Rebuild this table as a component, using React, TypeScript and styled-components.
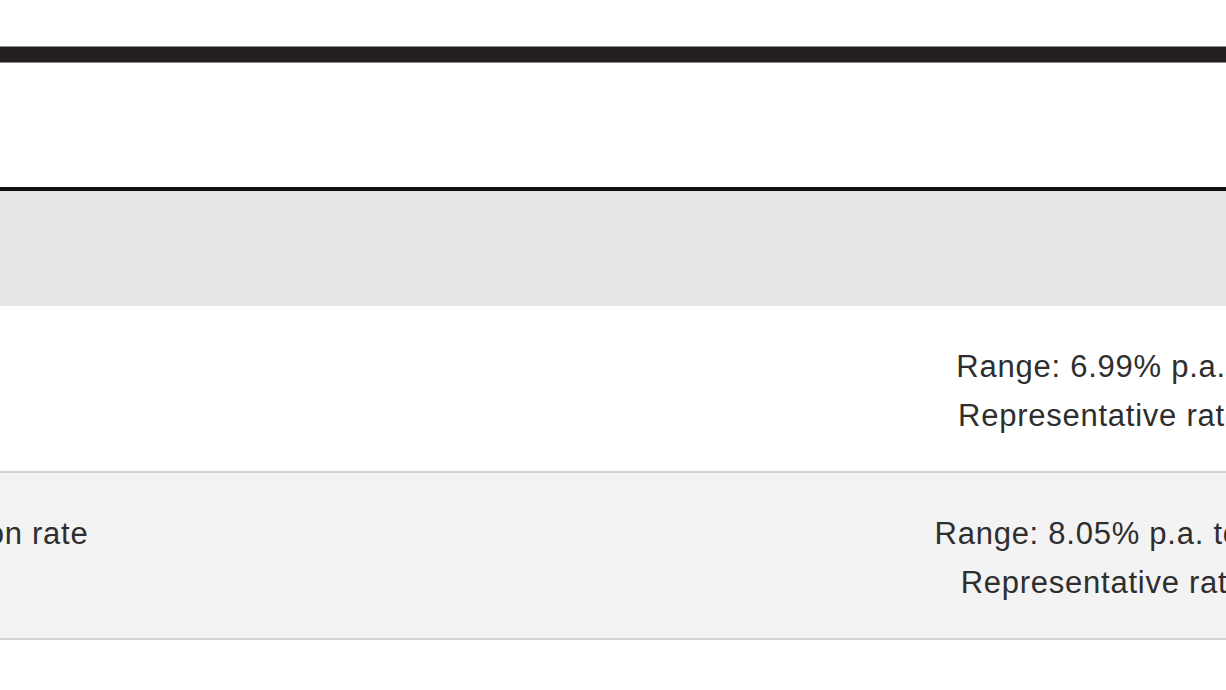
import React from "react";
import styled, { createGlobalStyle } from "styled-components";

const GlobalStyle = createGlobalStyle`
  html, body {
    margin: 0;
    padding: 0;
    background: #ffffff;
    overflow: hidden;
  }
`;

const Page = styled.div`
  width: 1226px;
  height: 690px;
  overflow: hidden;
  background: #ffffff;
  font-family: "Liberation Sans", Arial, sans-serif;
  color: #2e2e2e;
`;

const TopBar = styled.div`
  margin-top: 46px;
  height: 15px;
  background: #231f20;
  border-top: 1px solid #8c8a8b;
  border-bottom: 1px solid #8c8a8b;
`;

const Caption = styled.div`
  height: 124px;
`;

const RatesTable = styled.div`
  width: 1984px;
  margin-left: -200px;
  border-top: 4px solid #111111;
`;

const HeadRow = styled.div`
  height: 115px;
  background: #e6e6e6;
`;

const Row = styled.div<{ $shade?: boolean }>`
  display: grid;
  grid-template-columns: 800px 1184px;
  background: ${(p) => (p.$shade ? "#f3f3f3" : "#ffffff")};
  border-bottom: 2px solid #d3d3d3;
  padding: 36px 0 31px;
  font-size: 31px;
  line-height: 49px;
  letter-spacing: 0.75px;
`;

const Label = styled.div`
  padding-left: 48px;
`;

const Value = styled.div`
  text-align: center;
`;

const rows = [
  {
    label: "Rate",
    range: "Range: 6.99% p.a. to 19.9% p.a.",
    rep: "Representative rate 12.49% p.a.",
  },
  {
    label: "Comparison rate",
    range: "Range: 8.05% p.a. to 20.88% p.a.**",
    rep: "Representative rate 9.99% p.a.*",
  },
];

export default function App() {
  return (
    <Page>
      <GlobalStyle />
      <TopBar />
      <Caption />
      <RatesTable>
        <HeadRow />
        {rows.map((r, i) => (
          <Row key={r.label} $shade={i % 2 === 1}>
            <Label>{r.label}</Label>
            <Value>
              <div>{r.range}</div>
              <div>{r.rep}</div>
            </Value>
          </Row>
        ))}
      </RatesTable>
    </Page>
  );
}
